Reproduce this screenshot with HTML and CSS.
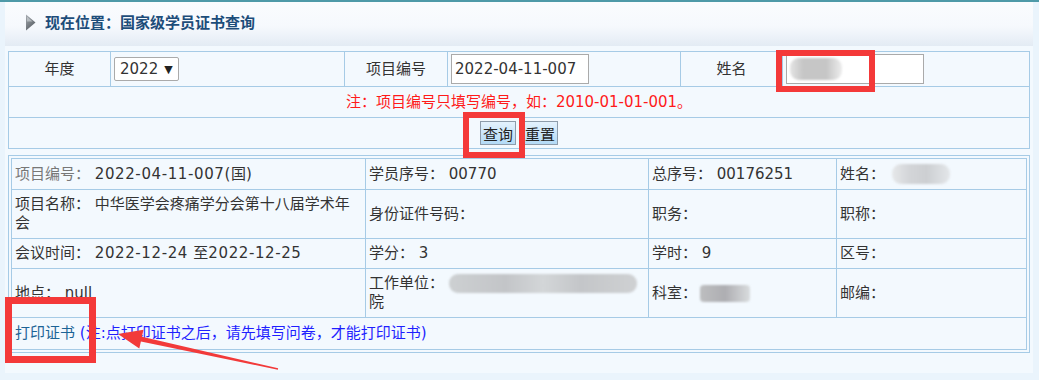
FILE: index.html
```html
<!DOCTYPE html>
<html lang="zh-CN">
<head>
    <meta charset="UTF-8">
    <title>国家级学员证书查询</title>
    <link rel="stylesheet" href="styles.css">
</head>
<body>
    <div class="page">
        <div class="crumb">
            <svg class="crumb-icon" width="11" height="17" viewBox="0 0 11 17">
                <defs>
                    <linearGradient id="tri" x1="0" y1="0" x2="0.6" y2="1">
                        <stop offset="0" stop-color="#a9aeb3"/>
                        <stop offset="1" stop-color="#585e64"/>
                    </linearGradient>
                </defs>
                <polygon points="1,0.5 10.5,8.5 1,16.5" fill="url(#tri)"/>
                <polygon points="2,2.5 7.5,7.5 2,7.5" fill="#d4d8dc" opacity="0.6"/>
            </svg>
            <span>现在位置：国家级学员证书查询</span>
        </div>

        <div class="content">
            <table class="search">
                <colgroup>
                    <col style="width:102px"><col style="width:234px"><col style="width:103px">
                    <col style="width:233px"><col style="width:102px"><col>
                </colgroup>
                <tr class="row-fields">
                    <td class="lbl">年度</td>
                    <td class="val"><span class="select">2022 <i>▼</i></span></td>
                    <td class="lbl">项目编号</td>
                    <td class="val"><input class="field" type="text" value="2022-04-11-007"></td>
                    <td class="lbl">姓名</td>
                    <td class="val"><span class="field"><span class="mask mask-input"></span></span></td>
                </tr>
                <tr class="row-note">
                    <td colspan="6" class="note">注：项目编号只填写编号，如：2010-01-01-001。</td>
                </tr>
                <tr class="row-actions">
                    <td colspan="6" class="actions"><button>查询</button><button>重置</button></td>
                </tr>
            </table>

            <div class="result-box">
                <table class="result">
                    <colgroup>
                        <col style="width:354px"><col style="width:283px"><col style="width:188px"><col>
                    </colgroup>
                    <tr>
                        <td><span class="muted">项目编号：</span> <span class="num">2022-04-11-007(</span>国<span class="num">)</span></td>
                        <td>学员序号： 00770</td>
                        <td>总序号： 00176251</td>
                        <td>姓名： <span class="mask mask-name"></span></td>
                    </tr>
                    <tr>
                        <td>项目名称： 中华医学会疼痛学分会第十八届学术年会</td>
                        <td>身份证件号码：</td>
                        <td>职务：</td>
                        <td>职称：</td>
                    </tr>
                    <tr>
                        <td>会议时间： <span class="num">2022-12-24 </span>至<span class="num">2022-12-25</span></td>
                        <td>学分： 3</td>
                        <td>学时： 9</td>
                        <td>区号：</td>
                    </tr>
                    <tr>
                        <td>地点： null</td>
                        <td>工作单位： <span class="mask mask-unit"></span>院</td>
                        <td>科室： <span class="mask mask-dept"></span></td>
                        <td>邮编：</td>
                    </tr>
                    <tr class="row-print">
                        <td colspan="4"><a class="print-link">打印证书</a> <span class="print-tip">(注:点打印证书之后，请先填写问卷，才能打印证书)</span></td>
                    </tr>
                </table>
            </div>
        </div>
    </div>

    <!-- red annotation marks drawn over the page -->
    <div class="mark mark-name"></div>
    <div class="mark mark-query"></div>
    <div class="mark mark-print"></div>
    <svg class="arrow" width="1039" height="380" viewBox="0 0 1039 380">
        <polygon points="118,334 143.5,329.8 141.9,336.7 278.1,368.3 277.9,369.7 140.9,341.5 139.3,348.4" fill="#f23a3a"/>
    </svg>
</body>
</html>
```

FILE: styles.css
```css
body {
    margin: 0;
    background-color: #eaf4fc;
    border-top: 2px solid #4f9aa8;
    font-family: "DejaVu Sans", "Noto Sans CJK SC", sans-serif;
    font-size: 15px;
    color: #333;
    position: relative;
    height: 378px;
    overflow: hidden;
}

.page {
    margin: 0 6px 0 5px;
}

.crumb {
    height: 44px;
    display: flex;
    align-items: center;
    padding-left: 20px;
    background: linear-gradient(#fafcfe 0%, #f6f9fd 55%, #e3ebf4 100%);
}

.crumb-icon {
    margin-right: 9px;
    margin-top: -3px;
}

.crumb span {
    font-weight: bold;
    color: #1d4d7a;
    line-height: 19px;
    margin-top: -1px;
}

.content {
    background-color: #f3f9fe;
    padding: 5px 3px 20px;
}

table {
    width: 100%;
    table-layout: fixed;
    border-collapse: collapse;
}

td {
    border: 1px solid #a6cbe6;
    line-height: 19px;
}

.search td {
    padding: 0;
}

.search .row-fields td {
    height: 34px;
}

.search .row-note td,
.search .row-actions td {
    height: 30px;
}

.search .lbl {
    text-align: center;
}

.search .val {
    padding-left: 3px;
}

.select {
    display: inline-flex;
    align-items: center;
    box-sizing: border-box;
    width: 65px;
    height: 24px;
    padding-left: 5px;
    background-color: #fff;
    border: 1px solid #aaa;
    border-radius: 2px;
    font-size: 15px;
}

.select i {
    font-style: normal;
    font-size: 11px;
    margin-left: 6px;
    color: #222;
}

.field {
    display: inline-flex;
    align-items: center;
    box-sizing: border-box;
    width: 138px;
    height: 30px;
    padding: 0 3px;
    margin: 0;
    background-color: #fff;
    border: 1px solid #aaa;
    font-family: inherit;
    font-size: 15px;
    color: #333;
    vertical-align: middle;
}

.note {
    text-align: center;
    color: #ff1a1a;
}

.actions {
    text-align: center;
}

.actions button {
    height: 24px;
    padding: 0 2px;
    margin: 0 3px;
    font-family: inherit;
    font-size: 15px;
    color: #222;
    border: 1px solid #8d9cab;
    background: linear-gradient(#e4f2fd, #b3daf6);
}

.result-box {
    margin-top: 6px;
    border: 1px solid #a6cbe6;
    padding: 2px;
}

.result td {
    padding: 5px 3px;
    vertical-align: middle;
}

.num {
    letter-spacing: 0.6px;
}

.muted {
    color: #777;
}

.result .row-print td {
    padding: 6px 3px;
}

.print-link {
    color: #1c6496;
}

.print-tip {
    color: #1f1fff;
}

.mask {
    display: inline-block;
    vertical-align: middle;
    border-radius: 9px;
    filter: blur(1px);
}

.mask-input {
    width: 52px;
    height: 22px;
    background: linear-gradient(90deg, #e4e4e4, #c6c6c6 25%, #c6c6c6 70%, #ededed);
}

.mask-name {
    width: 58px;
    height: 20px;
    margin-left: 2px;
    background: linear-gradient(90deg, #e6e8ea, #d3d5d8 30%, #cdcfd2 60%, #e4e7ea);
}

.mask-unit {
    width: 188px;
    height: 19px;
    background: linear-gradient(90deg, #cdd0d2, #c3c5c8 30%, #d3d6d8 50%, #c4c6c9 70%, #cfd1d3);
}

.mask-dept {
    width: 50px;
    height: 17px;
    margin-left: -2px;
    border-radius: 4px;
    background: linear-gradient(90deg, #bdbec0, #aeaeb2 50%, #d9dcde);
}

.mark {
    position: absolute;
    box-sizing: border-box;
    border: 6px solid #f43939;
}

.mark-name {
    left: 776px;
    top: 48px;
    width: 99px;
    height: 42px;
}

.mark-query {
    left: 463px;
    top: 110px;
    width: 62px;
    height: 46px;
}

.mark-print {
    left: 5px;
    top: 295px;
    width: 91px;
    height: 66px;
    border-width: 7px;
}

.arrow {
    position: absolute;
    left: 0;
    top: -2px;
    pointer-events: none;
}
```
